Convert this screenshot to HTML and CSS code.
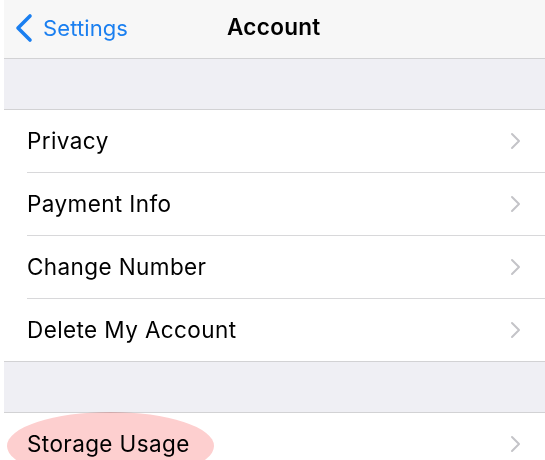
FILE: index.html
```html
<!DOCTYPE html>
<html>
<head>
<meta charset="utf-8">
<link rel="stylesheet" href="styles.css">
</head>
<body>
<div class="screen">
  <header class="nav">
    <div class="back">
      <svg class="back-icon" width="20" height="30" viewBox="0 0 20 30"><path d="M16 3 L4 15 L16 27" fill="none" stroke="#1a7ff0" stroke-width="3.6" stroke-linecap="round" stroke-linejoin="round"/></svg>
      <span class="back-label">Settings</span>
    </div>
    <div class="title">Account</div>
  </header>
  <div class="gap"></div>
  <ul class="group">
    <li class="row"><span class="label">Privacy</span><svg class="chev" width="11" height="18" viewBox="0 0 11 18"><path d="M2 2 L9 9 L2 16" fill="none" stroke="#c4c4c8" stroke-width="2" stroke-linecap="round" stroke-linejoin="round"/></svg></li>
    <li class="row"><span class="label">Payment Info</span><svg class="chev" width="11" height="18" viewBox="0 0 11 18"><path d="M2 2 L9 9 L2 16" fill="none" stroke="#c4c4c8" stroke-width="2" stroke-linecap="round" stroke-linejoin="round"/></svg></li>
    <li class="row"><span class="label">Change Number</span><svg class="chev" width="11" height="18" viewBox="0 0 11 18"><path d="M2 2 L9 9 L2 16" fill="none" stroke="#c4c4c8" stroke-width="2" stroke-linecap="round" stroke-linejoin="round"/></svg></li>
    <li class="row last"><span class="label">Delete My Account</span><svg class="chev" width="11" height="18" viewBox="0 0 11 18"><path d="M2 2 L9 9 L2 16" fill="none" stroke="#c4c4c8" stroke-width="2" stroke-linecap="round" stroke-linejoin="round"/></svg></li>
  </ul>
  <div class="gap"></div>
  <ul class="group">
    <li class="row highlighted"><span class="label">Storage Usage</span><svg class="chev" width="11" height="18" viewBox="0 0 11 18"><path d="M2 2 L9 9 L2 16" fill="none" stroke="#c4c4c8" stroke-width="2" stroke-linecap="round" stroke-linejoin="round"/></svg><span class="mark"></span></li>
  </ul>
</div>
</body>
</html>
```
FILE: styles.css
```css
html, body {
  margin: 0;
  padding: 0;
  background: #ffffff;
  overflow: hidden;
}
body {
  font-family: "Inter", "Liberation Sans", sans-serif;
}
.screen {
  width: 545px;
  height: 460px;
  position: relative;
  overflow: hidden;
  background: #ffffff;
}
.nav {
  height: 58px;
  background: #f7f7f7;
  border-bottom: 1px solid #d2d2d4;
  margin-left: 4px;
  position: relative;
  display: flex;
  align-items: center;
}
.back {
  display: flex;
  align-items: center;
  padding-left: 10px;
  gap: 9px;
  margin-top: -3px;
}
.back-label {
  color: #1a7ff0;
  font-size: 22px;
  letter-spacing: 0.1px;
}
.title {
  position: absolute;
  left: 223px;
  top: 13px;
  font-size: 22.5px;
  font-weight: 600;
  color: #000;
  letter-spacing: 0.3px;
}
.gap {
  height: 50px;
  background: #efeff4;
  border-bottom: 1px solid #d2d2d4;
  margin-left: 4px;
}
.group {
  list-style: none;
  margin: 0;
  padding: 0;
  margin-left: 4px;
  background: #fff;
}
.row {
  height: 62px;
  display: flex;
  align-items: center;
  justify-content: space-between;
  margin-left: 23px;
  padding-right: 24px;
  border-bottom: 1px solid #d8d8da;
  position: relative;
}
.row.last {
  margin-left: 0;
  padding-left: 23px;
  border-bottom-color: #d2d2d4;
}
.label {
  font-size: 22.5px;
  color: #000;
  letter-spacing: 0.4px;
  margin-top: -1px;
}
.chev {
  display: block;
}
.mark {
  position: absolute;
  left: -20px;
  top: -1px;
  width: 207px;
  height: 68px;
  border-radius: 50%;
  background: #fdcfcf;
  mix-blend-mode: multiply;
}
```
